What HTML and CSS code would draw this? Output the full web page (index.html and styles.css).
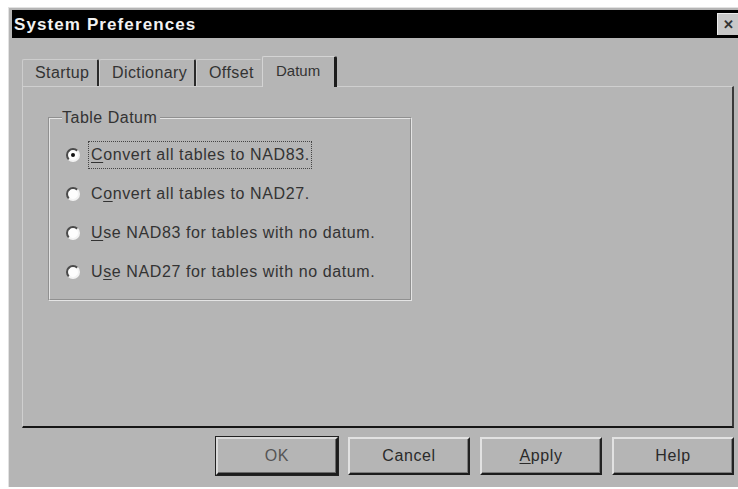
FILE: index.html
```html
<!DOCTYPE html>
<html lang="en">
<head>
<meta charset="utf-8">
<title>System Preferences</title>
<link rel="stylesheet" href="styles.css">
</head>
<body>
<div class="window">
  <div class="titlebar">
    <span class="title">System Preferences</span>
    <span class="close">&#x2715;</span>
  </div>
  <div class="content">
    <div class="tabs">
      <div class="tab">Startup</div>
      <div class="tab">Dictionary</div>
      <div class="tab plain">Offset</div>
      <div class="tab active">Datum</div>
    </div>
    <div class="panel">
      <fieldset class="group">
        <legend>Table Datum</legend>
        <div class="option">
          <span class="radio checked"></span>
          <span class="label focus"><u>C</u>onvert all tables to NAD83.</span>
        </div>
        <div class="option">
          <span class="radio"></span>
          <span class="label">C<u>o</u>nvert all tables to NAD27.</span>
        </div>
        <div class="option">
          <span class="radio"></span>
          <span class="label"><u>U</u>se NAD83 for tables with no datum.</span>
        </div>
        <div class="option">
          <span class="radio"></span>
          <span class="label">U<u>s</u>e NAD27 for tables with no datum.</span>
        </div>
      </fieldset>
    </div>
    <div class="buttons">
      <button class="btn default">OK</button>
      <button class="btn">Cancel</button>
      <button class="btn"><u>A</u>pply</button>
      <button class="btn">Help</button>
    </div>
  </div>
</div>
</body>
</html>
```

FILE: styles.css
```css
html, body {
  margin: 0;
  padding: 0;
  background: #ffffff;
}

body {
  font-family: "Liberation Sans", Arial, sans-serif;
  color: #2a2a2a;
  overflow: hidden;
}

/* dialog frame */
.window {
  margin: 7px 0 0 8px;
  width: 727px;
  height: 477px;
  background: #b5b5b5;
  border-top: 1px solid #e2e2e2;
  border-left: 1px solid #e2e2e2;
  padding: 2px 0 0 3px;
  overflow: hidden;
}

.titlebar {
  height: 28px;
  background: #000;
  display: flex;
  align-items: center;
  justify-content: space-between;
}

.title {
  color: #f2f2f2;
  font-weight: bold;
  font-size: 17px;
  letter-spacing: 1.1px;
  padding-left: 2px;
  padding-top: 1px;
}

.close {
  width: 20px;
  height: 21px;
  background: #c8c8c8;
  border-top: 1px solid #ececec;
  border-left: 1px solid #ececec;
  color: #333;
  font-size: 13px;
  font-weight: bold;
  display: flex;
  align-items: center;
  justify-content: center;
  margin-right: 1px;
}

.content {
  padding-left: 10px;
}

/* tab strip */
.tabs {
  display: flex;
  align-items: flex-end;
  margin-top: 17px;
  height: 31px;
}

.tab {
  height: 27px;
  box-sizing: border-box;
  padding: 4px 0 0 12px;
  font-size: 16px;
  letter-spacing: 0.4px;
  color: #333;
  border-top: 1px solid #cdcdcd;
  border-left: 1px solid #cdcdcd;
  border-right: 2px solid #2a2a2a;
  border-radius: 2px 2px 0 0;
  margin-top: 3px;
  white-space: nowrap;
  overflow: hidden;
}

.tab:nth-child(1) { width: 77px; }
.tab:nth-child(2) { width: 97px; }
.tab:nth-child(3) { width: 66px; border-right-color: #b5b5b5; }

.tab.active {
  height: 31px;
  width: 75px;
  margin-top: 0;
  padding-top: 5px;
  padding-left: 13px;
  font-size: 15px;
  letter-spacing: 0;
  border-top-color: #d4d4d4;
  border-left-color: #d4d4d4;
  border-right: 3px solid #1c1c1c;
  position: relative;
  top: 1px;
  background: #b5b5b5;
}

/* tab page */
.panel {
  width: 712px;
  height: 342px;
  box-sizing: border-box;
  border-top: 1px solid #cfcfcf;
  border-left: 1px solid #cfcfcf;
  border-right: 2px solid #3a3a3a;
  border-bottom: 2px solid #161616;
  padding: 22px 0 0 25px;
}

.group {
  margin: 0;
  width: 364px;
  height: 192px;
  box-sizing: border-box;
  border: 2px groove #e4e4e4;
  padding: 8px 0 0 16px;
}

.group legend {
  font-size: 16px;
  line-height: 18px;
  letter-spacing: 0.5px;
  padding: 0 3px 0 0;
  margin-left: -4px;
  color: #333;
}

.option {
  height: 39px;
  display: flex;
  align-items: center;
  gap: 8px;
}

.radio {
  width: 14px;
  height: 14px;
  box-sizing: border-box;
  border-radius: 50%;
  background: #fdfdfd;
  border: 2px solid;
  border-color: #4a4a4a #f2f2f2 #f2f2f2 #4a4a4a;
  display: flex;
  align-items: center;
  justify-content: center;
  flex: none;
}

.radio.checked::after {
  content: "";
  width: 4px;
  height: 4px;
  border-radius: 50%;
  background: #111;
}

.label {
  font-size: 16px;
  color: #333;
  letter-spacing: 0.6px;
  padding: 4px 1px 4px 2px;
  border: 1px dotted transparent;
}

.label.focus {
  border-color: #444;
}

.label u,
.btn u {
  text-decoration-thickness: 1px;
  text-underline-offset: 2px;
}

/* command buttons */
.buttons {
  display: flex;
  justify-content: flex-end;
  gap: 10px;
  width: 712px;
  margin-top: 9px;
}

.btn {
  width: 122px;
  height: 38px;
  box-sizing: border-box;
  background: #b5b5b5;
  font-family: "Liberation Sans", Arial, sans-serif;
  font-size: 16px;
  letter-spacing: 0.6px;
  color: #2a2a2a;
  border: 2px solid;
  border-color: #e2e2e2 #222 #1c1c1c #e2e2e2;
  box-shadow: inset -1px -1px 0 #7c7c7c;
  padding: 0;
  margin: 0;
}

.btn.default {
  color: #555;
  border-color: #dadada #1c1c1c #1c1c1c #dadada;
  box-shadow: inset -1px -1px 0 #6a6a6a, 0 0 0 1px #222;
}
```
